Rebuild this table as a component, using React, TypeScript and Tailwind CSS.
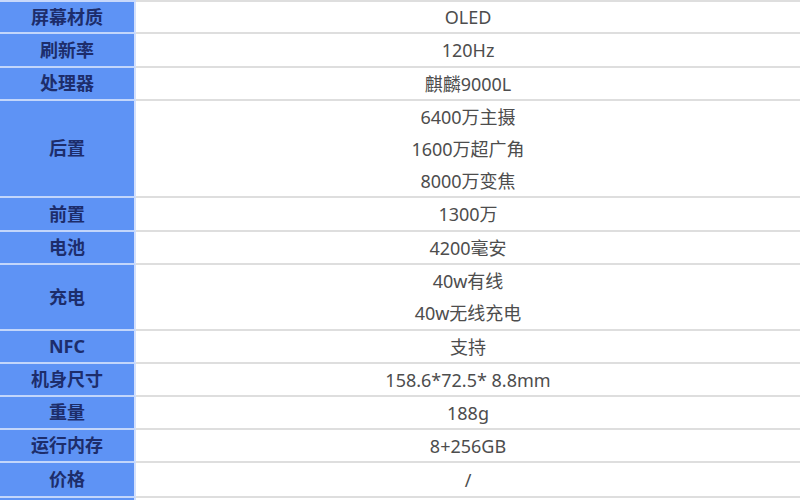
const rows: { label: string; values: string[]; h: string }[] = [
  { label: '屏幕材质', values: ['OLED'], h: 'h-[32px]' },
  { label: '刷新率', values: ['120Hz'], h: 'h-[34px]' },
  { label: '处理器', values: ['麒麟9000L'], h: 'h-[33px]' },
  { label: '后置', values: ['6400万主摄', '1600万超广角', '8000万变焦'], h: 'h-[97px]' },
  { label: '前置', values: ['1300万'], h: 'h-[34px]' },
  { label: '电池', values: ['4200毫安'], h: 'h-[33px]' },
  { label: '充电', values: ['40w有线', '40w无线充电'], h: 'h-[66px]' },
  { label: 'NFC', values: ['支持'], h: 'h-[33px]' },
  { label: '机身尺寸', values: ['158.6*72.5* 8.8mm'], h: 'h-[33px]' },
  { label: '重量', values: ['188g'], h: 'h-[33px]' },
  { label: '运行内存', values: ['8+256GB'], h: 'h-[33px]' },
  { label: '价格', values: ['/'], h: 'h-[35px]' },
];

export default function App() {
  return (
    <div
      className="w-[800px] h-[500px] overflow-hidden bg-white"
      style={{ fontFamily: '"Noto Sans", "Noto Sans CJK SC", sans-serif' }}
    >
      {/* bottom edge of the row above, cut off by the frame */}
      <div className="flex h-[2px]">
        <div className="w-[136px] bg-[#c9d9fb]" />
        <div className="flex-1 bg-[#dedede]" />
      </div>
      {rows.map((row) => (
        <div key={row.label} className={`flex ${row.h}`}>
          <div className="w-[136px] flex items-center justify-center bg-[#5e93f5] border-r-2 border-r-[#d3e0fc] border-b-2 border-b-[#c3d6fb] text-[18px] font-bold text-[#1d2d6b]">
            {row.label}
          </div>
          <div className="flex-1 flex flex-col justify-center items-center border-b-2 border-b-[#dedede] text-[18px] text-[#4d4d4d]">
            {row.values.map((v) => (
              <div key={v} className="leading-[32px]">
                {v}
              </div>
            ))}
          </div>
        </div>
      ))}
      {/* next row, only its top edge is in view */}
      <div className="flex h-[33px]">
        <div className="w-[136px] bg-[#5e93f5] border-r-2 border-r-[#d3e0fc]" />
        <div className="flex-1" />
      </div>
    </div>
  );
}
